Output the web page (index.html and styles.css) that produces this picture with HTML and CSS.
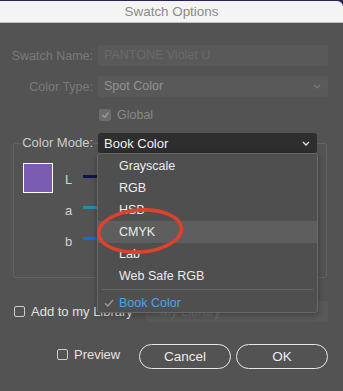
FILE: index.html
```html
<!DOCTYPE html>
<html>
	<head>
		<title>Swatch Options</title>
		<link rel="stylesheet" href="styles.css">
	</head>
	<body>
		<div id="window">
			<div id="title-bar">Swatch Options</div>

			<div id="form">
				<div class="row">
					<span class="label dim">Swatch Name:</span>
					<div class="field disabled">PANTONE Violet U</div>
				</div>
				<div class="row">
					<span class="label dim">Color Type:</span>
					<div class="field select-dim">
						<span>Spot Color</span>
						<svg class="chevron" width="8" height="5" viewBox="0 0 8 5"><polyline points="1,1 4,4 7,1" fill="none" stroke="#7c7c7c" stroke-width="1.2"/></svg>
					</div>
				</div>
				<div class="row row-check">
					<span></span>
					<label class="check-label dim-check">
						<span class="checkbox checked">
							<svg width="9" height="8" viewBox="0 0 9 8"><polyline points="1.5,4 3.6,6.2 7.5,1.5" fill="none" stroke="#9c9c9c" stroke-width="1.5"/></svg>
						</span>
						Global
					</label>
				</div>

				<div id="group">
					<div id="group-head">
						<span class="label bright">Color Mode:</span>
						<div id="mode-select">
							<span>Book Color</span>
							<svg class="chevron" width="8" height="5" viewBox="0 0 8 5"><polyline points="1,1 4,4 7,1" fill="none" stroke="#e6e6e6" stroke-width="1.3"/></svg>
						</div>
					</div>
					<div id="group-body">
						<div id="swatch"></div>
						<div id="sliders">
							<div class="slider"><span class="channel">L</span><div class="bar bar-l"></div></div>
							<div class="slider"><span class="channel">a</span><div class="bar bar-a"></div></div>
							<div class="slider"><span class="channel">b</span><div class="bar bar-b"></div></div>
						</div>
					</div>
				</div>

				<div id="library-row">
					<label class="check-label">
						<span class="checkbox"></span>
						Add to my Library
					</label>
					<div id="library-field">My Library</div>
				</div>

				<div id="button-row">
					<label class="check-label">
						<span class="checkbox"></span>
						Preview
					</label>
					<div id="buttons">
						<button type="button" class="btn">Cancel</button>
						<button type="button" class="btn">OK</button>
					</div>
				</div>
			</div>

			<!-- open dropdown menu -->
			<div id="menu">
				<div class="menu-item">Grayscale</div>
				<div class="menu-item">RGB</div>
				<div class="menu-item">HSB</div>
				<div class="menu-item hover">CMYK</div>
				<div class="menu-item">Lab</div>
				<div class="menu-item">Web Safe RGB</div>
				<div class="menu-sep"></div>
				<div class="menu-item selected">
					<svg class="tick" width="10" height="8" viewBox="0 0 10 8"><polyline points="1,4.2 3.8,7 9,1" fill="none" stroke="#9a9a9a" stroke-width="1.4"/></svg>
					Book Color
				</div>
			</div>

			<!-- red annotation circle -->
			<svg id="annotation" width="92" height="52" viewBox="0 0 92 52">
				<ellipse cx="46" cy="26" rx="41.5" ry="21" fill="none" stroke="#e0412c" stroke-width="3.6" transform="rotate(-4 46 26)"/>
			</svg>
		</div>
	</body>
</html>
```

FILE: styles.css
```css
html {
	height: 100%;
}

body {
	margin: 0;
	height: 100%;
	background-color: rgb(42, 36, 88);
	font-family: "Liberation Sans", Arial, sans-serif;
	font-size: 12.5px;
	overflow: hidden;
}

#window {
	position: relative;
	margin-top: 1px;
	height: 390px;
	background-color: rgb(83, 83, 83);
	border-top-right-radius: 6px;
}

#title-bar {
	height: 21px;
	line-height: 22px;
	text-align: center;
	font-size: 13.4px;
	color: rgb(138, 138, 138);
	background-color: rgb(244, 244, 244);
	border-bottom: 1px solid rgb(190, 190, 190);
	border-top-right-radius: 6px;
}

#form {
	padding-top: 22px;
}

.row {
	display: grid;
	grid-template-columns: 85px 230px;
	column-gap: 5px;
	padding-left: 8px;
	height: 21px;
	align-items: center;
	margin-bottom: 10px;
}

.row-check {
	height: 16px;
}

.label {
	text-align: right;
	white-space: nowrap;
}

.dim {
	color: rgb(122, 122, 122);
}

.bright {
	color: rgb(204, 204, 204);
}

.field {
	height: 21px;
	box-sizing: border-box;
	padding-left: 6px;
	line-height: 21px;
	border-radius: 3px;
	background-color: rgb(89, 89, 89);
	display: flex;
	align-items: center;
}

.disabled {
	color: rgb(106, 106, 106);
}

.select-dim {
	color: rgb(146, 146, 146);
	justify-content: space-between;
	padding-right: 7px;
}

.check-label {
	display: flex;
	align-items: center;
	color: rgb(226, 226, 226);
	white-space: nowrap;
}

.dim-check {
	color: rgb(138, 138, 138);
	margin-left: 1px;
}

.checkbox {
	width: 11px;
	height: 11px;
	box-sizing: border-box;
	border: 1px solid rgb(205, 205, 205);
	border-radius: 2px;
	margin-right: 6px;
	display: flex;
	align-items: center;
	justify-content: center;
}

.checked {
	width: 12px;
	height: 12px;
	border: none;
	background-color: rgb(108, 108, 108);
}

/* Color Mode group box */
#group {
	margin: 20px 0 0 13px;
	width: 314px;
	box-sizing: border-box;
	border: 1px solid rgb(98, 98, 98);
	border-radius: 2px;
	padding-bottom: 25px;
}

#group-head {
	display: flex;
	align-items: center;
	margin-top: -11px;
	height: 20px;
}

#group-head .label {
	margin-left: 7px;
	width: 72px;
	background-color: rgb(83, 83, 83);
	line-height: 20px;
	font-size: 13px;
}

#mode-select {
	margin-left: 5px;
	width: 219px;
	height: 20px;
	box-sizing: border-box;
	padding: 0 7px 0 6px;
	border-radius: 3px;
	background-color: rgb(46, 46, 46);
	color: rgb(240, 240, 240);
	font-size: 13px;
	display: flex;
	align-items: center;
	justify-content: space-between;
}

#group-body {
	display: flex;
	margin-top: 10px;
	padding-left: 9px;
}

#swatch {
	width: 30px;
	height: 30px;
	box-sizing: border-box;
	border: 1px solid rgb(255, 255, 255);
	background-color: rgb(122, 92, 178);
}

#sliders {
	flex: 1;
	padding-top: 5px;
	display: flex;
	flex-direction: column;
	gap: 9px;
}

.slider {
	height: 22px;
	display: flex;
	align-items: center;
}

.channel {
	width: 30px;
	padding-left: 12px;
	box-sizing: border-box;
	color: rgb(210, 210, 210);
	font-size: 13px;
}

/* slider tracks run on under the open menu */
.bar {
	width: 160px;
	height: 3px;
	margin-bottom: 5px;
}

.bar-l {
	background-color: rgb(16, 20, 76);
}

.bar-a {
	background-color: rgb(46, 138, 171);
}

.bar-b {
	background-color: rgb(10, 110, 232);
}

#library-row {
	display: flex;
	align-items: center;
	height: 21px;
	margin-top: 23px;
	padding-left: 14px;
}

#library-row .check-label {
	font-size: 13px;
}

#library-field {
	margin-left: auto;
	margin-right: 15px;
	width: 182px;
	height: 21px;
	line-height: 21px;
	box-sizing: border-box;
	padding-left: 14px;
	border-radius: 3px;
	background-color: rgb(89, 89, 89);
	color: rgb(110, 110, 110);
	font-size: 13px;
}

#button-row {
	display: flex;
	align-items: center;
	margin-top: 22px;
	padding-left: 57px;
	padding-right: 15px;
	height: 25px;
}

#button-row .check-label {
	font-size: 13px;
	margin-top: -4px;
}

#buttons {
	margin-left: auto;
	display: flex;
	gap: 5px;
}

.btn {
	width: 92px;
	height: 25px;
	box-sizing: border-box;
	border: 1.5px solid rgb(232, 232, 232);
	border-radius: 13px;
	background: transparent;
	color: rgb(236, 236, 236);
	font-family: "Liberation Sans", Arial, sans-serif;
	font-size: 13.5px;
	padding: 0;
}

/* dropdown popup */
#menu {
	position: absolute;
	left: 97px;
	top: 152px;
	width: 221px;
	height: 160px;
	box-sizing: border-box;
	padding-top: 1px;
	background-color: rgb(79, 79, 79);
	border: 1px solid rgb(104, 104, 104);
	border-radius: 3px;
	box-shadow: 0 2px 6px rgba(0, 0, 0, 0.3);
}

.menu-item {
	height: 22px;
	line-height: 22px;
	padding-left: 21px;
	position: relative;
	color: rgb(236, 236, 236);
	font-size: 12.5px;
}

.hover {
	background-color: rgb(94, 94, 94);
}

.menu-sep {
	height: 1px;
	margin: 2px 4px 2px 4px;
	background-color: rgb(102, 102, 102);
}

.selected {
	color: rgb(77, 163, 236);
	line-height: 22px;
}

.tick {
	position: absolute;
	left: 6px;
	top: 7px;
}

#annotation {
	position: absolute;
	left: 94px;
	top: 204px;
}
```
